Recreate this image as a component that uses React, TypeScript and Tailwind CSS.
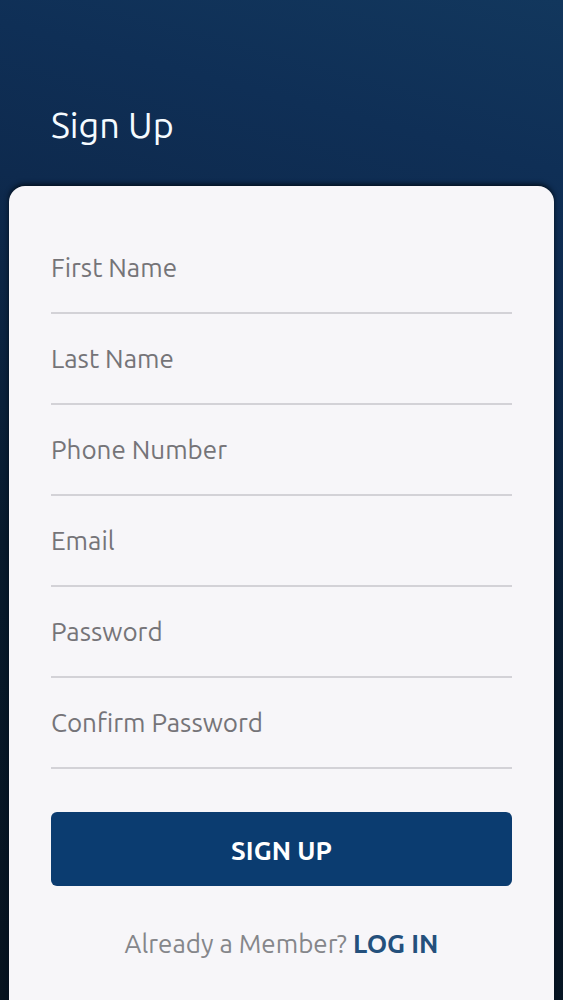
type Field = {
  id: string;
  label: string;
  type: string;
  autoComplete: string;
};

const fields: Field[] = [
  { id: "first-name", label: "First Name", type: "text", autoComplete: "given-name" },
  { id: "last-name", label: "Last Name", type: "text", autoComplete: "family-name" },
  { id: "phone", label: "Phone Number", type: "tel", autoComplete: "tel" },
  { id: "email", label: "Email", type: "email", autoComplete: "email" },
  { id: "password", label: "Password", type: "password", autoComplete: "new-password" },
  { id: "confirm-password", label: "Confirm Password", type: "password", autoComplete: "new-password" },
];

// The label shares the input's grid cell and hides once the input has a value.
function FormField({ id, label, type, autoComplete }: Field) {
  return (
    <div className="grid">
      <input
        id={id}
        name={id}
        type={type}
        autoComplete={autoComplete}
        placeholder=" "
        className="peer col-start-1 row-start-1 w-full border-b-2 border-[#d3d2d7] bg-transparent pt-[27px] pb-[26px] text-[26px] leading-9 text-[#4b4b50] focus:border-[#0b3c70] focus:outline-none"
      />
      <label
        htmlFor={id}
        className="pointer-events-none invisible col-start-1 row-start-1 pt-[27px] text-[26px] leading-9 text-[#757478] peer-placeholder-shown:visible"
      >
        {label}
      </label>
    </div>
  );
}

export default function App() {
  return (
    <div className="flex min-h-screen flex-col bg-[linear-gradient(195deg,#12375d_0%,#0f2f56_15%,#0e2a4e_28%,#0b2340_42%,#081a2c_60%,#07131f_100%)] px-[9px] font-['Ubuntu','Noto_Sans',sans-serif]">
      <header className="px-[42px] pt-[101px] pb-[37px]">
        <h1 className="text-[36px] leading-[48px] text-[#f5fbff]">Sign Up</h1>
      </header>
      <main className="flex-1 rounded-t-2xl bg-[#f7f6f9] px-[42px] pt-[37px] pb-9 shadow-[0_-2px_5px_0px_#03101e]">
        <form onSubmit={(event) => event.preventDefault()}>
          {fields.map((field) => (
            <FormField key={field.id} {...field} />
          ))}
          <button
            type="submit"
            className="mt-[43px] block w-full rounded-md bg-[#0b3c70] pt-[22px] pb-[18px] text-[26px] leading-[34px] font-bold text-white"
          >
            SIGN UP
          </button>
        </form>
        <p className="mt-10 text-center text-[26px] leading-9 text-[#85868a]">
          Already a Member?{" "}
          <a href="#login" className="font-bold text-[#24507c]">
            LOG IN
          </a>
        </p>
      </main>
    </div>
  );
}
